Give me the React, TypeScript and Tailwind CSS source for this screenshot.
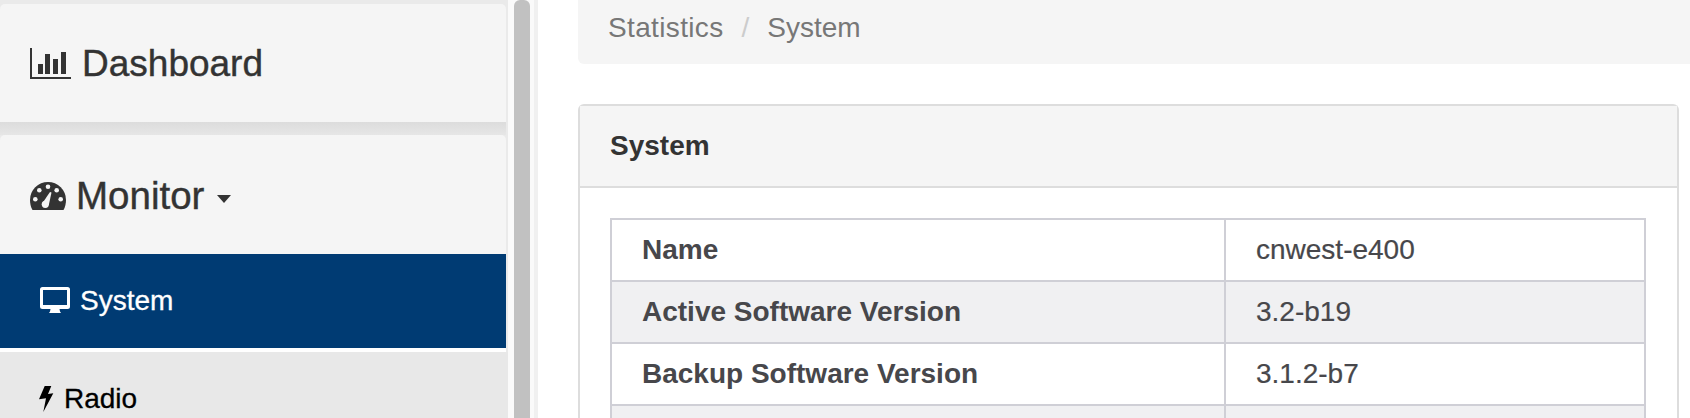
const rows = [
  { label: 'Name', value: 'cnwest-e400' },
  { label: 'Active Software Version', value: '3.2-b19' },
  { label: 'Backup Software Version', value: '3.1.2-b7' },
  { label: '', value: '' },
]

function BarChartIcon() {
  return (
    <svg width="41" height="32" viewBox="0 0 41 32" fill="#333" className="shrink-0">
      <path d="M0 0h2v29h39v2H0z" />
      <rect x="8" y="16" width="5" height="10" />
      <rect x="15" y="6" width="5" height="20" />
      <rect x="23" y="11" width="5" height="15" />
      <rect x="31" y="4" width="5" height="22" />
    </svg>
  )
}

function GaugeIcon() {
  return (
    <svg width="36" height="28" viewBox="0 0 36 28" className="shrink-0">
      <path d="M18 0a18 18 0 0 1 18 18c0 3.500-.8 7-2.500 10H2.500C.8 25 0 21.500 0 18A18 18 0 0 1 18 0z" fill="#333" />
      <g fill="#f5f5f5">
        <circle cx="5.300" cy="17.300" r="2.300" />
        <circle cx="9.300" cy="8.300" r="2.300" />
        <circle cx="18" cy="4.700" r="2.300" />
        <circle cx="26.700" cy="8.300" r="2.300" />
        <circle cx="30.700" cy="17.300" r="2.300" />
        <circle cx="15.300" cy="22.300" r="3.600" />
        <path d="M12.500 21l7.500-11 1.500.5L18.800 23z" />
      </g>
    </svg>
  )
}

function DesktopIcon() {
  return (
    <svg width="30" height="26" viewBox="0 0 30 26" fill="#fff" className="shrink-0">
      <path
        fillRule="evenodd"
        d="M2.500 0h25A2.500 2.500 0 0 1 30 2.500v17a2.500 2.500 0 0 1-2.500 2.500H19.500l.5 2.500 1 1.500H9l1-1.500.5-2.500h-8A2.500 2.500 0 0 1 0 19.500v-17A2.500 2.500 0 0 1 2.500 0zM3 3v15h24V3z"
      />
    </svg>
  )
}

function BoltIcon() {
  return (
    <svg width="15" height="26" viewBox="0 0 15 26" fill="#000" className="shrink-0">
      <path d="M5.700 0h6.600L9 8l5.300-.7-10 18.700L7 12.300 0 13.300z" />
    </svg>
  )
}

export default function App() {
  return (
    <div className="flex h-[418px] w-[1690px] overflow-hidden bg-white font-['Liberation_Sans',Arial,sans-serif]">
      {/* Sidebar */}
      <div className="flex w-[508px] shrink-0 flex-col bg-[#eaeaea] pt-[4px]">
        <div className="mr-[2px] flex h-[118px] shrink-0 items-center rounded-t-[5px] bg-[#f5f5f5] pl-[30px] pt-[2px] text-[37px] text-[#333] [-webkit-text-stroke:0.4px_#333]">
          <BarChartIcon />
          <span className="ml-[11px]">Dashboard</span>
        </div>
        <div className="mr-[2px] h-[13px] shrink-0 bg-gradient-to-b from-[#dcdcdc] to-[#e6e6e6]" />
        <div className="mr-[2px] flex h-[119px] shrink-0 items-center rounded-t-[5px] bg-[#f5f5f5] pl-[30px] pt-[3px] text-[38.500px] text-[#333] [-webkit-text-stroke:0.4px_#333]">
          <GaugeIcon />
          <span className="ml-[10px]">Monitor</span>
          <span className="ml-[13px] mt-[5px] h-0 w-0 border-x-[7.500px] border-t-[8px] border-x-transparent border-t-[#333]" />
        </div>
        <div className="mr-[2px] flex h-[94px] shrink-0 items-center bg-[#003b73] pl-[40px] text-[28px] text-white [-webkit-text-stroke:0.3px_#fff]">
          <span className="-mt-[3px] flex">
            <DesktopIcon />
          </span>
          <span className="ml-[10px]">System</span>
        </div>
        <div className="mr-[2px] h-[4px] shrink-0 bg-white" />
        <div className="flex h-[66px] shrink-0 items-start bg-[#e8e8e8] pl-[39px] pt-[34px] text-[28px] leading-[28px] text-black [-webkit-text-stroke:0.3px_#000]">
          <BoltIcon />
          <span className="ml-[10px] -mt-px">Radio</span>
        </div>
      </div>

      {/* Scrollbar */}
      <div className="flex w-[30px] shrink-0 bg-[#fafafa] pl-[6px]">
        <div className="h-full w-[16px] rounded-t-[6px] bg-[#c1c1c1]" />
        <div className="ml-[4px] h-full w-[4px] bg-[#f0f0f0]" />
      </div>

      {/* Main */}
      <div className="ml-[40px] flex min-w-0 flex-1 flex-col">
        <div className="flex h-[64px] shrink-0 items-start rounded-bl-[6px] bg-[#f5f5f5] pl-[30px] pt-[12px] text-[28px] leading-[32px] text-[#777]">
          <span className="tracking-[0.35px]">Statistics</span>
          <span className="mx-[18px] text-[#ccc]">/</span>
          <span>System</span>
        </div>

        <div className="mt-[40px] mr-[11px] flex-1 rounded-t-[6px] border-2 border-b-0 border-[#ddd]">
          <div className="flex h-[82px] items-center border-b-2 border-[#ddd] bg-[#f5f5f5] pl-[30px] text-[28px] font-bold text-[#333]">
            System
          </div>
          <div className="px-[30px] pt-[30px]">
            <table className="w-[1036px] table-fixed border-collapse text-[28px] text-[#47474b]">
              <tbody>
                {rows.map((row, i) => (
                  <tr key={i} className={i % 2 === 1 ? 'bg-[#f0f0f2]' : 'bg-white'}>
                    <td className="h-[62px] w-[614px] border-2 border-[#cfcfd6] pl-[30px] font-bold">
                      {row.label}
                    </td>
                    <td className="h-[62px] border-2 border-[#cfcfd6] pl-[30px] [-webkit-text-stroke:0.2px_#47474b]">
                      {row.value}
                    </td>
                  </tr>
                ))}
              </tbody>
            </table>
          </div>
        </div>
      </div>
    </div>
  )
}
